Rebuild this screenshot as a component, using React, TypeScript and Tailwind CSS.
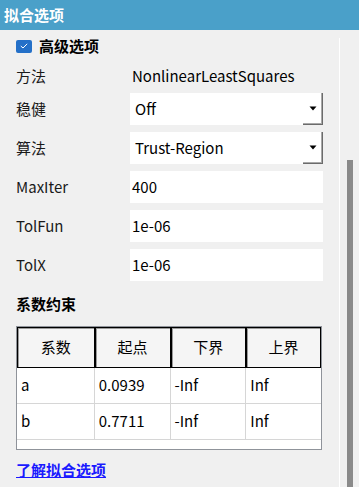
import React from "react";

const font = { fontFamily: '"Noto Sans CJK SC", "Noto Sans", sans-serif' };

function Dropdown({ value }: { value: string }) {
  return (
    <div className="flex h-[32px] w-[193px] items-stretch bg-white">
      <div className="flex flex-1 items-center pl-[5px] text-[15px] text-black">{value}</div>
      <div className="flex w-[20px] items-center justify-center border-b border-r border-[#6b6b6b] shadow-[inset_-1px_-1px_0_#a8a8a8]">
        <svg width="8" height="5" viewBox="0 0 8 5">
          <path d="M0.5 0.5 H7.5 L4 4.5 Z" fill="#000" />
        </svg>
      </div>
    </div>
  );
}

function TextBox({ value }: { value: string }) {
  return (
    <div className="flex h-[32px] w-[193px] items-center bg-white pl-[2px] text-[15px] text-black">{value}</div>
  );
}

function Row({ label, children }: { label: string; children: React.ReactNode }) {
  return (
    <div className="flex h-[32px] items-center">
      <div className="w-[114px] text-[15px] text-[#1a1a1a]">{label}</div>
      {children}
    </div>
  );
}

export default function App() {
  const cols = ["系数", "起点", "下界", "上界"];
  const widths = ["w-[78px]", "w-[76px]", "w-[76px]", "w-[75px]"];
  const rows = [
    ["a", "0.0939", "-Inf", "Inf"],
    ["b", "0.7711", "-Inf", "Inf"],
  ];
  return (
    <div className="relative h-[487px] w-[359px] overflow-hidden bg-[#f0f0f0]" style={font}>
      <div className="flex h-[30px] items-center bg-[#4aa0c9] pl-[4px] text-[15px] font-bold text-white">
        拟合选项
      </div>
      <div className="flex h-[457px]">
        <div className="w-[339px] pl-[16px]">
          <div className="mt-[4px] flex h-[24px] items-center">
            <div className="flex h-[13px] w-[16px] items-center justify-center rounded-[2px] bg-[#2470c8]">
              <svg width="8" height="6" viewBox="0 0 8 6">
                <path d="M0.8 3 L3 5 L7.2 0.8" fill="none" stroke="#fff" strokeWidth="1" />
              </svg>
            </div>
            <span className="ml-[7px] text-[15px] font-bold text-black">高级选项</span>
          </div>
          <div className="mt-[6px] flex h-[24px] items-center">
            <div className="w-[116px] text-[15px] text-[#1a1a1a]">方法</div>
            <div className="text-[15px] text-black">NonlinearLeastSquares</div>
          </div>
          <div className="mt-[5px] flex flex-col gap-[7px]">
            <Row label="稳健">
              <Dropdown value="Off" />
            </Row>
            <Row label="算法">
              <Dropdown value="Trust-Region" />
            </Row>
            <Row label="MaxIter">
              <TextBox value="400" />
            </Row>
            <Row label="TolFun">
              <TextBox value="1e-06" />
            </Row>
            <Row label="TolX">
              <TextBox value="1e-06" />
            </Row>
          </div>
          <div className="mt-[13px] flex h-[20px] items-center text-[15px] font-bold text-black">系数约束</div>
          <div className="mt-[12px] w-[306px] border border-[#8f939a] bg-white">
            <div className="flex h-[41px] bg-[#f5f5f5]">
              {cols.map((c, i) => (
                <div
                  key={c}
                  className={`${widths[i]} flex items-center justify-center border border-black text-[15px] text-black shadow-[inset_1px_1px_0_#9a9a9a]`}
                >
                  {c}
                </div>
              ))}
            </div>
            {rows.map((r) => (
              <div key={r[0]} className="flex h-[36px] border-b border-[#d6d6d6]">
                {r.map((v, i) => (
                  <div
                    key={i}
                    className={`${widths[i]} flex items-center pl-[4px] text-[15px] text-black ${i < 3 ? "border-r border-[#d6d6d6]" : ""}`}
                  >
                    {v}
                  </div>
                ))}
              </div>
            ))}
            <div className="h-[9px]" />
          </div>
          <div className="mt-[9px] text-[15px] font-bold text-[#1a1aff] underline">了解拟合选项</div>
        </div>
        <div className="mt-[8px] w-[1px] bg-white" />
        <div className="flex w-[19px] pl-[7px]">
          <div className="mt-[130px] h-[400px] w-[6px] bg-[#8a8a8a]" />
        </div>
      </div>
    </div>
  );
}
